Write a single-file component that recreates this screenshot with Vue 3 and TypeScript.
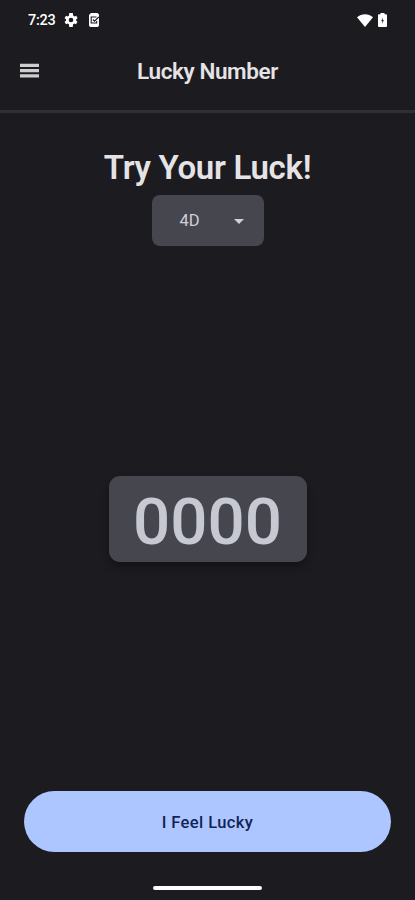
<script setup lang="ts">
import { computed, ref } from 'vue'

const digits = ref<number>(4)
const picked = ref<string>('0000')
const gameLabel = computed(() => `${digits.value}D`)

function draw(): void {
  picked.value = Array.from({ length: digits.value }, () => Math.floor(Math.random() * 10)).join('')
}
</script>

<template>
  <div class="screen">
    <div class="status">
      <span class="clock">7:23</span>
      <svg class="gear" viewBox="2 2 20 20">
        <path fill="currentColor" fill-rule="evenodd" d="M19.4 13a7.500 7.500 0 0 0 0-2l2.100-1.600-2-3.500-2.500 1a7.300 7.300 0 0 0-1.700-1L14.500 2h-5L9 5.900a7.300 7.300 0 0 0-1.700 1l-2.500-1-2 3.500L4.900 11a7.500 7.500 0 0 0 0 2l-2.100 1.600 2 3.500 2.500-1c.5.4 1.100.7 1.700 1l.5 3.900h5l.5-3.900c.6-.3 1.200-.6 1.700-1l2.500 1 2-3.500zM12 15.300a3.300 3.300 0 1 1 0-6.600 3.300 3.300 0 0 1 0 6.600z" />
      </svg>
      <svg class="task" viewBox="0 0 12 14">
        <path fill="currentColor" d="M3 0h6.500L11 1.500v10.700A1.800 1.800 0 0 1 9.200 14H2.800A1.800 1.800 0 0 1 1 12.200V2z" />
        <path class="cut" d="M8.500 4H3.200v6h5.500V8M5 6.500l1.500 1.600L10.800 4" />
      </svg>
      <svg class="wifi" viewBox="0 0 16 13">
        <path fill="currentColor" d="M0 3.300C4.500-.9 11.500-.9 16 3.300L8 13z" />
      </svg>
      <svg class="battery" viewBox="0 0 9 14">
        <path fill="currentColor" fill-rule="evenodd" d="M2.500 0h4v1.300H8A1 1 0 0 1 9 2.300V13a1 1 0 0 1-1 1H1a1 1 0 0 1-1-1V2.300a1 1 0 0 1 1-1h1.500zM4.700 4.500 3.300 8h1v2.700L5.800 7H4.700z" />
      </svg>
    </div>
    <header class="bar">
      <button class="menu" aria-label="Menu">
        <svg viewBox="0 0 19 15"><path fill="currentColor" d="M0 .7h19v3.200H0zM0 6h19v3.200H0zM0 11.300h19v3.200H0z" /></svg>
      </button>
      <h1 class="title">Lucky Number</h1>
    </header>
    <main class="content">
      <h2 class="headline">Try Your Luck!</h2>
      <button class="select">
        <span>{{ gameLabel }}</span>
        <svg class="caret" viewBox="0 0 10 5"><path fill="currentColor" d="M0 0h10L5 5z" /></svg>
      </button>
      <div class="stage">
        <div class="result">{{ picked }}</div>
      </div>
      <button class="draw" @click="draw">I Feel Lucky</button>
    </main>
    <div class="handle" />
  </div>
</template>

<style>
body {
  margin: 0;
  background: #1c1b1f;
}
</style>

<style scoped>
.screen {
  box-sizing: border-box;
  display: flex;
  flex-direction: column;
  height: 900px;
  background: #1c1b1f;
  color: #e5e3e6;
  font-family: Roboto, 'Liberation Sans', sans-serif;
}
button {
  border: 0;
  padding: 0;
  font-family: inherit;
}
svg {
  display: block;
  flex: none;
}
.status {
  display: flex;
  align-items: center;
  height: 40px;
  padding: 0 28px;
  color: #fff;
}
.clock {
  width: 36px;
  font-size: 14.5px;
  font-weight: 500;
  letter-spacing: -0.3px;
}
.gear {
  width: 14px;
  height: 14px;
}
.task {
  width: 12px;
  height: 14px;
  margin-left: 10px;
}
.cut {
  fill: none;
  stroke: #1c1b1f;
  stroke-width: 1.1;
}
.wifi {
  width: 16px;
  height: 13px;
  margin-left: auto;
}
.battery {
  width: 9px;
  height: 14px;
  margin-left: 5px;
}
.bar {
  box-sizing: border-box;
  display: grid;
  grid-template-columns: 60px 1fr 60px;
  align-items: center;
  height: 73px;
  padding-bottom: 9px;
  border-bottom: 3px solid #303034;
}
.menu {
  width: 19px;
  margin-left: 20px;
  background: none;
  color: #cecdd0;
}
.title {
  margin: 0;
  font-size: 22.5px;
  font-weight: 600;
  line-height: 30px;
  letter-spacing: -0.4px;
  text-align: center;
  white-space: nowrap;
}
.content {
  display: flex;
  flex: 1;
  flex-direction: column;
  align-items: center;
  padding: 35px 24px 0;
}
.headline {
  margin: 0;
  font-size: 33px;
  font-weight: 600;
  line-height: 40px;
  letter-spacing: -0.3px;
  white-space: nowrap;
}
.select {
  box-sizing: border-box;
  display: flex;
  align-items: center;
  justify-content: space-between;
  width: 112px;
  height: 51px;
  margin-top: 7px;
  padding: 0 20px 1px 28px;
  border-radius: 8px;
  background: #46464f;
  color: #d0d0d9;
  font-size: 16.5px;
}
.caret {
  width: 10px;
  height: 5px;
  margin-top: 3px;
}
.stage {
  display: flex;
  flex: none;
  align-items: center;
  height: 545px;
}
.result {
  box-sizing: border-box;
  width: 198px;
  height: 86px;
  border-radius: 11px;
  background: #46464f;
  box-shadow: 0 5px 8px rgba(0, 0, 0, 0.3);
  color: #c6c8d2;
  font-size: 65.5px;
  font-weight: 500;
  line-height: 92px;
  text-align: center;
}
.draw {
  box-sizing: border-box;
  width: 367px;
  height: 61px;
  padding-top: 2px;
  border-radius: 31px;
  background: #adc6ff;
  color: #112456;
  font-size: 16.5px;
  font-weight: 500;
  letter-spacing: 0.4px;
}
.handle {
  width: 109px;
  height: 4px;
  margin: 0 auto 10px;
  border-radius: 2px;
  background: #fff;
}
</style>
